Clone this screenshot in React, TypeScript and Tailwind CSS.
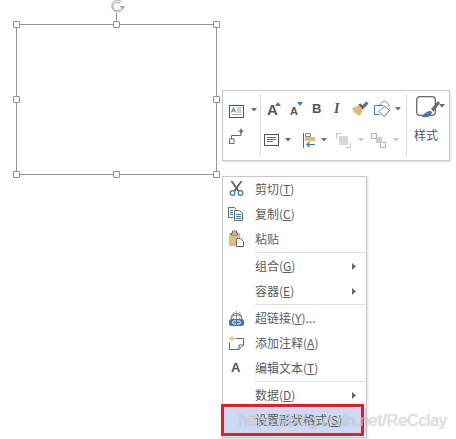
import type { ReactNode } from 'react';

const font = { fontFamily: '"Noto Sans CJK SC", sans-serif' };
const sans = { fontFamily: '"Liberation Sans", sans-serif' };

function Handle({ className }: { className: string }) {
  return <div className={`absolute w-[7px] h-[7px] bg-white border border-[#8f8f8f] rounded-[1px] ${className}`} />;
}

function Caret({ muted = false }: { muted?: boolean }) {
  return (
    <svg width="6" height="4" viewBox="0 0 6 4" className="shrink-0">
      <path d="M0 0h6L3 3.500z" fill={muted ? '#c8c8c8' : '#6a6a6a'} />
    </svg>
  );
}

function Shape() {
  return (
    <div className="absolute left-[16px] top-[24px] w-[201px] h-[151px] border border-[#979797]">
      <Handle className="left-[-4px] top-[-4px]" />
      <Handle className="left-[96px] top-[-4px]" />
      <Handle className="right-[-4px] top-[-4px]" />
      <Handle className="left-[-4px] top-[71px]" />
      <Handle className="right-[-4px] top-[71px]" />
      <Handle className="left-[-4px] bottom-[-4px]" />
      <Handle className="left-[96px] bottom-[-4px]" />
      <Handle className="right-[-4px] bottom-[-4px]" />
      <div className="absolute left-[99px] top-[-12px] w-px h-[9px] bg-[#979797]" />
      <svg width="18" height="14" viewBox="0 0 18 14" className="absolute left-[92px] top-[-25px]" fill="none">
        <path d="M13.500 2.500A6 6 0 1 0 14 9" stroke="#b0b0b0" strokeWidth="1" />
        <path d="M11.500 3.800A4.300 4.300 0 1 0 12 8.500" stroke="#a0a0a0" strokeWidth="1" />
        <path d="M10.500 6h6L13.500 9.500z" fill="#a8a8a8" />
      </svg>
    </div>
  );
}

function Toolbar() {
  return (
    <div className="absolute left-[222px] top-[90px] w-[228px] h-[71px] bg-white border border-[#c8c8c8] shadow-[1px_1px_2px_rgba(0,0,0,0.12)] flex">
      <div className="w-[37px] flex flex-col pl-[6px]">
        <div className="h-[37px] flex items-center gap-[7px]">
          <svg width="15" height="13" viewBox="0 0 15 13" fill="none" className="mt-[3px]">
            <rect x="0.500" y="0.500" width="14" height="12" stroke="#555" />
            <path d="M2.500 7.500l2-5 2 5M3.300 6h2.400" stroke="#3c78b8" />
            <path d="M8 3h4.500M8 5h4.500M8 7h4.500M2.500 9.500h10" stroke="#a0a0a0" />
          </svg>
          <Caret />
        </div>
        <svg width="16" height="16" viewBox="0 0 16 16" fill="none">
          <rect x="0.500" y="11" width="4.500" height="4.500" stroke="#3c78b8" />
          <path d="M2.500 11V7.500h9.500V3" stroke="#666" />
          <path d="M12 .5v5M9.500 3h5" stroke="#444" />
        </svg>
      </div>
      <div className="w-px h-[62px] mt-[3px] bg-[#dcdcdc]" />
      <div className="w-[145px] flex flex-col">
        <div className="h-[37px] flex items-center pl-[6px] pt-[1px]">
          <div className="relative w-[23px] h-[20px] text-[15px] leading-[20px] font-bold text-[#555]" style={sans}>
            A
            <svg width="6" height="4" viewBox="0 0 6 4" className="absolute left-[8px] top-[2px]"><path d="M0 4h6L3 0z" fill="#3c78b8" /></svg>
          </div>
          <div className="relative w-[22px] h-[20px] text-[11px] leading-[22px] font-bold text-[#555]" style={sans}>
            A
            <svg width="6" height="4" viewBox="0 0 6 4" className="absolute left-[7px] top-[2px]"><path d="M0 0h6L3 4z" fill="#3c78b8" /></svg>
          </div>
          <span className="w-[22px] text-[13px] leading-[16px] mb-[3px] font-bold text-[#555]" style={sans}>B</span>
          <span className="w-[18px] text-[14px] leading-[16px] mb-[3px] italic font-bold text-[#555]" style={{ fontFamily: '"Liberation Serif", serif' }}>I</span>
          <svg width="17" height="15" viewBox="0 0 17 15" className="mb-[3px]">
            <path d="M0 7.500L7 4l4 4.500-3 6C4.500 14 1.500 11 0 7.500z" fill="#e6bb78" />
            <path d="M6.500 3.500l2-1 3.500 4-1 2z" fill="#555" />
            <path d="M10 4.500L14.500 .5l2 2-4 4.500z" fill="#6a6a6a" />
          </svg>
          <svg width="18" height="16" viewBox="0 0 18 16" fill="none" className="ml-[5px] mb-[3px]">
            <path d="M9 4.500H.5v9h5" stroke="#3c78b8" />
            <path d="M10.500 5l5 4.500-5.500 6-5-5z" stroke="#3c78b8" />
            <path d="M6 4c0-2 2-3.500 4.500-3.500S15.500 3 15 6.500" stroke="#8a8a8a" />
          </svg>
          <span className="ml-[3px] mb-[2px]"><Caret /></span>
        </div>
        <div className="h-[24px] flex items-center pl-[3px]">
          <svg width="15" height="12" viewBox="0 0 15 12" fill="none">
            <rect x="0.500" y="0.500" width="14" height="11" stroke="#555" />
            <path d="M3 3.500h9M3 5.500h9M3 7.500h6" stroke="#3c78b8" />
          </svg>
          <span className="ml-[6px]"><Caret /></span>
          <svg width="12" height="15" viewBox="0 0 12 15" fill="none" className="ml-[12px]">
            <path d="M.5 0v15" stroke="#666" />
            <path d="M2.500 .5h5v3h-5z" stroke="#888" />
            <rect x="2" y="4" width="10" height="4" fill="#e6bb78" />
            <path d="M12 11.500H4M6.500 9l-2.500 2.500L6.500 14" stroke="#3c78b8" strokeWidth="1.200" />
          </svg>
          <span className="ml-[6px]"><Caret /></span>
          <svg width="15" height="15" viewBox="0 0 15 15" fill="none" className="ml-[9px]">
            <path d="M5.500 .5H.5v5M9.500 14.500h5v-5" stroke="#c4c4c4" />
            <rect x="3" y="3" width="9" height="9" fill="#d9d6da" />
          </svg>
          <span className="ml-[7px]"><Caret muted /></span>
          <svg width="15" height="15" viewBox="0 0 15 15" fill="none" className="ml-[7px]">
            <rect x=".5" y=".5" width="5" height="5" stroke="#b5b5b5" />
            <rect x="9.500" y="9.500" width="5" height="5" stroke="#b5b5b5" />
            <rect x="5" y="4" width="6" height="6" fill="#cfcdd0" />
          </svg>
          <span className="ml-[7px]"><Caret muted /></span>
        </div>
      </div>
      <div className="w-px h-[62px] mt-[3px] bg-[#dcdcdc]" />
      <div className="flex-1 flex flex-col">
        <div className="h-[33px] flex items-center pl-[9px]">
          <svg width="26" height="23" viewBox="0 0 26 23" fill="none">
            <rect x="0.700" y="0.700" width="18.600" height="18.600" rx="3" stroke="#6a6a6a" strokeWidth="1.300" />
            <path d="M15 13l7-8 2 2-6.500 8.500z" fill="#6a6a6a" />
            <path d="M6 21c2-4 6-6.500 9-6l1 1.500c-1 4-4 5.500-10 4.500z" fill="#3c78b8" />
          </svg>
          <span className="ml-[-3px] mb-[3px]"><Caret /></span>
        </div>
        <span className="pl-[7px] mt-[1px] text-[12px] leading-[20px] text-[#555]" style={font}>样式</span>
      </div>
    </div>
  );
}

type MenuRow = { label: string; key?: string; suffix?: string; icon?: ReactNode; sub?: boolean };

const sets: MenuRow[][] = [
  [
    {
      label: '剪切',
      key: 'T',
      icon: (
        <svg width="15" height="15" viewBox="0 0 15 15" fill="none">
          <path d="M2.500 0l7 10M12.500 0l-7 10" stroke="#5f5f5f" strokeWidth="1.700" />
          <circle cx="3.500" cy="12" r="2.300" stroke="#3c78b8" strokeWidth="1.300" />
          <circle cx="11.500" cy="12" r="2.300" stroke="#3c78b8" strokeWidth="1.300" />
        </svg>
      ),
    },
    {
      label: '复制',
      key: 'C',
      icon: (
        <svg width="15" height="14" viewBox="0 0 15 14" fill="none" className="ml-[-1px]">
          <path d="M5 10.500H.5V.5h6l1.500 2" stroke="#666" />
          <path d="M2 3.500h3M2 5.500h3M2 7.500h3" stroke="#3c78b8" />
          <path d="M6.500 3.500h5l3 3v7h-8z" fill="#fff" stroke="#666" />
          <path d="M8 7.500h5M8 9.500h5M8 11.500h5" stroke="#3c78b8" />
        </svg>
      ),
    },
    {
      label: '粘贴',
      icon: (
        <svg width="15" height="17" viewBox="0 0 15 17" fill="none">
          <path d="M0 3h11v13H0z" fill="#e6bb78" />
          <path d="M3.500 3V1h4v2M2.500 3h6v2h-6z" stroke="#666" fill="#fff" />
          <path d="M7.500 8.500h4l3 3v5h-7z" fill="#fff" stroke="#666" />
        </svg>
      ),
    },
  ],
  [
    { label: '组合', key: 'G', sub: true },
    { label: '容器', key: 'E', sub: true },
  ],
  [
    {
      label: '超链接',
      key: 'Y',
      suffix: '...',
      icon: (
        <svg width="15" height="16" viewBox="0 0 15 16" fill="none">
          <path d="M2 9a5.500 5.500 0 1 1 11 0" stroke="#666" />
          <path d="M2 5.500h11M7.500 1v8M4.500 2c-1 2-1 5 0 7M10.500 2c1 2 1 5 0 7" stroke="#888" strokeWidth=".8" />
          <rect x="0" y="9" width="15" height="7" rx="2.500" fill="#3c78b8" />
          <path d="M7 11H5a1.500 1.500 0 0 0 0 3h2M8 11h2a1.500 1.500 0 0 1 0 3H8" stroke="#fff" />
        </svg>
      ),
    },
    {
      label: '添加注释',
      key: 'A',
      icon: (
        <svg width="16" height="15" viewBox="0 0 16 15" fill="none" className="ml-[-1px]">
          <path d="M4 .5v6M1 3.500h6M2 1.500l4 4M6 1.500l-4 4" stroke="#e6bb78" />
          <path d="M7.500 3.500h8V10L11 14.500H1.500V7.500" stroke="#666" />
          <path d="M11 14.500V10h4.500" stroke="#666" />
        </svg>
      ),
    },
    {
      label: '编辑文本',
      key: 'T',
      icon: <span className="ml-[2px] text-[13px] leading-[13px] font-bold text-[#555]" style={sans}>A</span>,
    },
  ],
  [
    { label: '数据', key: 'D', sub: true },
    { label: '设置形状格式', key: 'S' },
  ],
];

function Row({ row, active }: { row: MenuRow; active: boolean }) {
  return (
    <div className={`relative h-[25px] pb-[2px] flex items-center text-[12px] text-[#5c5c5c] ${active ? 'bg-[#cdd9f5]' : ''}`} style={font}>
      <div className="w-[32px] shrink-0 flex justify-start pl-[6px]">{row.icon}</div>
      <span className="whitespace-nowrap">
        {row.label}
        {row.key && (
          <>
            (<span className="underline">{row.key}</span>)
          </>
        )}
        {row.suffix}
      </span>
      {row.sub && (
        <svg width="4" height="7" viewBox="0 0 4 7" className="absolute left-[129px] top-[9px]">
          <path d="M0 0l4 3.500L0 7z" fill="#666" />
        </svg>
      )}
    </div>
  );
}

function Menu() {
  return (
    <div className="absolute left-[222px] top-[176px] w-[145px] h-[262px] bg-white border border-[#c8c8c8] shadow-[1px_1px_2px_rgba(0,0,0,0.12)]">
      {sets.map((group, i) => (
        <div key={i}>
          {i > 0 && <div className="ml-[32px] mr-[1px] h-[1px] mb-[1px] bg-[#dedede]" />}
          {group.map((row) => (
            <Row key={row.label} row={row} active={row.label === '设置形状格式'} />
          ))}
        </div>
      ))}
    </div>
  );
}

export default function App() {
  return (
    <div className="relative w-[456px] h-[439px] overflow-hidden bg-white">
      <Shape />
      <Toolbar />
      <Menu />
      {/* red highlight box drawn on top of the screenshot */}
      <div className="absolute left-[221px] top-[404px] w-[143px] h-[32px] border-[3px] border-[#ed1c24]" />
      {/* csdn watermark */}
      <span
        className="absolute left-[239px] top-[411px] text-[16px] leading-[20px] text-white/60 whitespace-nowrap [text-shadow:0_0_1px_rgba(0,0,0,0.35)]"
        style={sans}
      >
        https://blog.csdn.net/ReCclay
      </span>
    </div>
  );
}
